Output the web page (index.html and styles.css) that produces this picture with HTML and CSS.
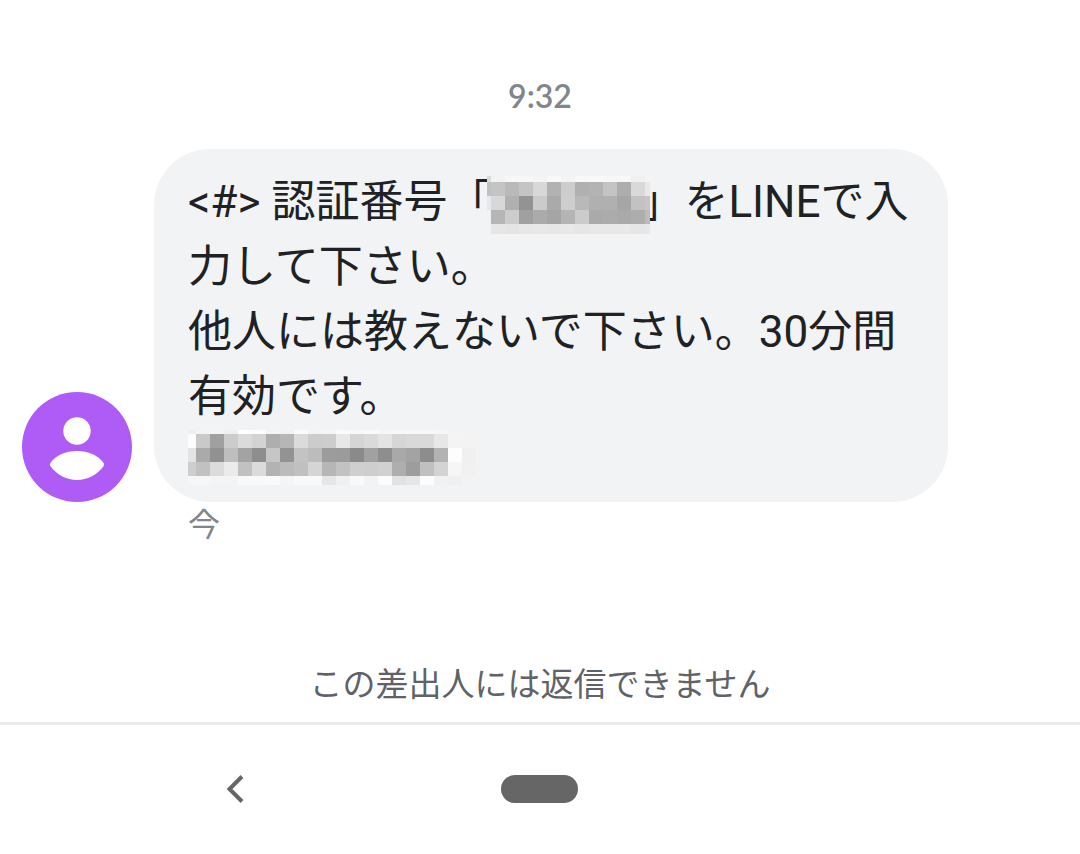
FILE: index.html
```html
<!DOCTYPE html>
<html lang="ja">
<head>
    <meta charset="utf-8">
    <title>メッセージ</title>
    <meta name="viewport" content="width=device-width, initial-scale=1.0">
    <link rel="stylesheet" href="styles.css">
</head>

<body>

    <main class="conversation">
        <time class="time">9:32</time>

        <div class="message">
            <svg class="avatar" viewBox="0 0 110 110" aria-hidden="true">
                <circle cx="55" cy="55" r="55" fill="#af5cf7"/>
                <circle cx="55" cy="39" r="13.7" fill="#fff"/>
                <path d="M28.3 71C34 63 44 59 55 59s21 4 26.700 12q.8 1.500 0 3C75 83 65 88 55 88s-20-5-26.700-14q-.8-1.500 0-3z" fill="#fff"/>
            </svg>
            <div class="bubble">
                <p>&lt;#&gt; 認証番号「<svg id="codeMask" class="mask mask-code"></svg>」をLINEで入<wbr>力して下さい。<br>他人には教えないで下さい。30分間有効です。</p>
                <p class="link-line"><svg id="linkMask" class="mask mask-link"></svg></p>
            </div>
        </div>

        <p class="status">今</p>
    </main>

    <p class="notice">この差出人には返信できません</p>

    <nav class="nav-bar">
        <button class="nav-button" aria-label="戻る">
            <svg width="20" height="28" viewBox="0 0 20 28"><path d="M17 1.500 4.500 14 17 26.500" fill="none" stroke="#666" stroke-width="4"/></svg>
        </button>
        <button class="nav-button" aria-label="ホーム"><span class="home-pill"></span></button>
    </nav>

    <script src="script.js"></script>
</body>
</html>
```

FILE: styles.css
```css
body {
    margin: 0;
    min-height: 100vh;
    display: flex;
    flex-direction: column;
    background-color: #fff;
    color: #202124;
    font-family: Roboto, "Noto Sans CJK JP", sans-serif;
}

p {
    margin: 0;
}

.conversation {
    flex: 1;
    display: flex;
    flex-direction: column;
    padding: 76px 132px 0 22px;
}

.time {
    margin-right: -110px;
    margin-bottom: 33px;
    text-align: center;
    font-family: Lato, sans-serif;
    font-size: 32px;
    font-weight: 600;
    line-height: 40px;
    color: #80868b;
}

.message {
    display: flex;
    align-items: flex-end;
    gap: 22px;
}

.avatar {
    flex: none;
    width: 110px;
    height: 110px;
}

.bubble {
    flex: 1;
    padding: 21px 34px 19px;
    border-radius: 56px;
    background-color: #f1f3f4;
    font-size: 44px;
    line-height: 65px;
}

.link-line {
    height: 53px;
    line-height: 0;
}

/* drawn above the brackets on both sides */
.mask {
    position: relative;
    overflow: visible;
}

.mask-code {
    width: 163px;
    height: 58px;
    margin: -8px -10px -8px -4px;
    vertical-align: -9px;
}

.mask-link {
    width: 288px;
    height: 55px;
}

.status {
    margin-left: 166px;
    font-size: 32px;
    line-height: 46px;
    color: #80868b;
}

.notice {
    padding: 17px 0 15px;
    text-align: center;
    font-size: 33px;
    line-height: 44px;
    color: #5f6368;
}

.nav-bar {
    display: grid;
    grid-template-columns: repeat(3, 1fr);
    padding: 32px 82px 33px;
    border-top: 3px solid #e8eaed;
}

.nav-button {
    display: flex;
    justify-content: center;
    align-items: center;
    height: 64px;
    padding: 0;
    border: none;
    background: none;
    cursor: pointer;
}

.home-pill {
    width: 77px;
    height: 28px;
    border-radius: 14px;
    background-color: #666;
}
```

FILE: script.js
```js
// each row: height of the row, then one grey level (hex) per column
const codeMask = {
    widths: [4, 14, 14, 14, 14, 14, 14, 14, 14, 14, 14, 14, 5],
    rows: [
        [6, 'd9 f2 f7 f7 f4 f9 f4 f8 f9 f7 f8 f0 f3'],
        [14, 'c0 c4 b9 c4 d8 b2 cd b0 b3 c4 ad d9 e8'],
        [14, 'e8 d8 b0 93 cb aa ce b9 b0 b0 a6 c2 c6'],
        [14, 'f2 b6 cc a0 ab a5 b4 cb aa ac aa ad bc'],
        [10, 'f2 e6 e4 e7 e8 e7 e8 e6 e8 e8 e8 e6 e8']
    ]
};

const linkMask = {
    widths: [8, 14, 14, 14, 14, 14, 14, 14, 14, 14, 14, 14, 14, 14, 14, 14, 14, 14, 14, 14, 14],
    rows: [
        [4, 'ef f4 f4 f0 fe fc f4 f2 fb f4 f5 fb f8 fa f6 f8 f8 f8 f6 f3 f3'],
        [14, 'fc c9 a0 cc db d3 ae b6 db cc cd e8 d5 da e4 d6 d9 d9 e7 f4 f3'],
        [14, 'e4 aa 91 be a3 8e c6 93 c3 bc 9c 9b 8a a1 8e a9 a3 8d b2 fd f0'],
        [14, 'ce c1 dc eb c1 db b3 bb c0 d5 b6 c2 cf ce d1 ae 9d c0 d3 f6 f1'],
        [9, 'f6 f6 f4 f4 f9 f9 fa f5 f9 f9 e6 f0 f9 f3 fc e2 e6 fc f1 f0 f3']
    ]
};

function drawMask(id, mask) {
    const svg = document.getElementById(id);
    let y = 0;
    mask.rows.forEach(function ([height, levels]) {
        let x = 0;
        levels.split(' ').forEach(function (level, i) {
            const rect = document.createElementNS('http://www.w3.org/2000/svg', 'rect');
            rect.setAttribute('x', x);
            rect.setAttribute('y', y);
            rect.setAttribute('width', mask.widths[i]);
            rect.setAttribute('height', height);
            rect.setAttribute('fill', '#' + level + level + level);
            svg.appendChild(rect);
            x += mask.widths[i];
        });
        y += height;
    });
}

drawMask('codeMask', codeMask);
drawMask('linkMask', linkMask);
```
